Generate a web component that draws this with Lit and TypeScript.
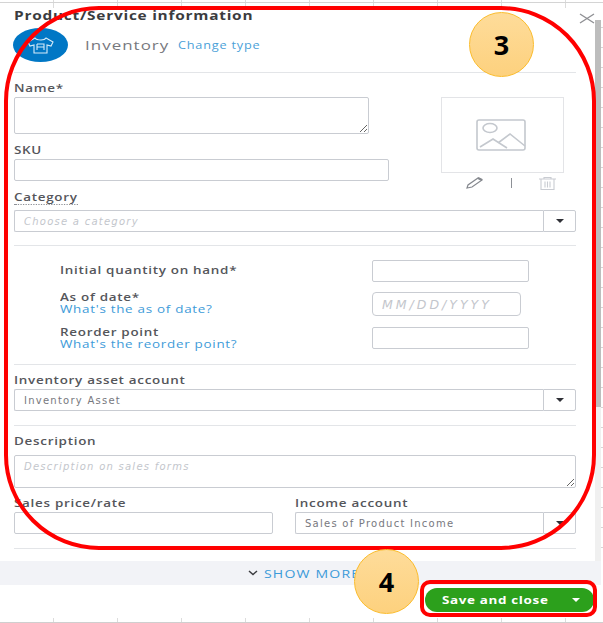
import {LitElement, css, html} from "lit";
import {customElement} from "lit/decorators.js";

@customElement("app-root")
export class AppRoot extends LitElement {

  static styles = css`
    :host {
      display: block;
      position: relative;
      width: 603px;
      height: 623px;
      overflow: hidden;
      background: #fff;
      font-family: "Open Sans", sans-serif;
      color: #4a4b50;
    }
    * { box-sizing: border-box; }

    /* spreadsheet showing behind the panel */
    .sheet-top {
      height: 8px;
      background:
        linear-gradient(#d4d4d4, #d4d4d4) 0 2px / 100% 1px no-repeat,
        repeating-linear-gradient(90deg, transparent 0 53px, #dcdcdc 53px 54px, transparent 54px 64px);
    }
    .sheet-bottom {
      height: 5px;
      margin-top: 1px;
      background:
        linear-gradient(#cfcfcf, #cfcfcf) 0 4px / 100% 1px no-repeat,
        repeating-linear-gradient(90deg, transparent 0 53px, #dcdcdc 53px 54px, transparent 54px 64px);
    }

    .panel { display: flex; height: 553px; }
    .form {
      width: 595px;
      padding: 1px 19px 0 14px;
      flex: none;
    }
    .scroll {
      width: 6px;
      flex: none;
      margin-top: 12px;
      background: #f0f0f0;
    }
    .thumb { height: 387px; background: #bdbdbd; }
    .gutter {
      flex: 1;
      background: repeating-linear-gradient(180deg, transparent 0 19px, #d6d6d6 19px 20px);
    }

    /* the reference is a horizontally stretched capture */
    .wide {
      display: block;
      width: fit-content;
      transform: scaleX(1.28);
      transform-origin: left center;
    }

    .title-row {
      display: flex;
      justify-content: space-between;
      align-items: center;
      height: 14px;
      margin-right: -19px;
    }
    .title {
      font-size: 11.5px;
      font-weight: 700;
      letter-spacing: 0.56px;
      line-height: 14px;
      color: #3b3c40;
      transform: scaleX(1.34);
    }
    .close { width: 16px; height: 11px; display: block; margin-top: 4px; }

    .head { display: flex; align-items: center; height: 34px; margin-top: 5px; }
    .avatar {
      width: 55px;
      height: 34px;
      margin-left: -1px;
      border-radius: 50%;
      background: #0077c5;
      display: flex;
      align-items: center;
      justify-content: center;
      flex: none;
    }
    .type {
      margin-left: 17px;
      font-size: 13px;
      letter-spacing: 0.8px;
      color: #77787e;
      transform: scaleX(1.3);
    }
    .change {
      margin-left: 28px;
      font-size: 10px;
      letter-spacing: 0.62px;
      color: #4a9fd8;
      transform: scaleX(1.27);
    }

    hr { border: 0; height: 1px; background: #e3e5e8; margin: 0; }
    .hr-head { margin-top: 10px; }

    label {
      display: block;
      width: fit-content;
      font-size: 10.5px;
      font-weight: 600;
      letter-spacing: 0.55px;
      line-height: 14px;
      color: #55565b;
      transform: scaleX(1.28);
      transform-origin: left center;
    }
    input, textarea {
      display: block;
      margin: 0;
      padding: 0 9px;
      background: #fff;
      border: 1px solid #c9ccd2;
      border-radius: 2px;
      font-family: "DejaVu Sans", sans-serif;
      font-size: 10px;
      letter-spacing: 1.25px;
      color: #77787e;
      outline: none;
    }
    input { height: 22px; }
    textarea { padding-top: 3px; }
    ::placeholder { color: #c3c6cc; font-style: italic; opacity: 1; }

    .top {
      display: grid;
      grid-template-columns: 427px 123px;
      margin-top: 8px;
      height: 100px;
    }
    .name { width: 355px; height: 37px; margin-top: 2px; }
    .sku-label { margin-top: 9px; }
    .sku { width: 375px; margin-top: 2px; }
    .photo-col { padding-top: 16px; }
    .photo {
      height: 76px;
      padding-right: 4px;
      border: 1px solid #e3e4e7;
      display: flex;
      align-items: center;
      justify-content: center;
    }
    .photo-tools {
      display: flex;
      align-items: center;
      justify-content: space-between;
      height: 14px;
      margin-top: 3px;
      padding: 0 8px 0 24px;
    }
    .bar { width: 1px; height: 10px; background: #8d9096; }

    label.cat-label {
      margin-top: 10px;
      border-bottom: 1px dotted #8d9096;
      line-height: 13px;
    }
    .select { display: flex; height: 22px; margin-top: 5px; }
    .select input {
      flex: 1;
      min-width: 0;
      border-right: 0;
      border-radius: 2px 0 0 2px;
    }
    .caret {
      width: 33px;
      flex: none;
      border: 1px solid #c9ccd2;
      border-radius: 0 2px 2px 0;
      display: flex;
      align-items: center;
      justify-content: center;
    }
    .caret i {
      width: 0;
      height: 0;
      border-left: 4px solid transparent;
      border-right: 4px solid transparent;
      border-top: 4px solid #2f3036;
    }
    .hr-cat { margin-top: 13px; }

    .qty {
      display: grid;
      grid-template-columns: 312px auto;
      grid-template-rows: 22px 24px 23px;
      row-gap: 10px;
      align-items: center;
      padding: 14px 0 15px 46px;
      justify-items: start;
    }
    .qty input { width: 157px; }
    .qty input.r3 { align-self: end; }
    .qty input.date {
      width: 149px;
      height: 24px;
      border-radius: 4px;
      font-size: 12.5px;
      letter-spacing: 3px;
    }
    .lift { margin-bottom: 2px; }
    .two label { line-height: 12px; }
    .link {
      font-size: 10.5px;
      letter-spacing: 0.55px;
      line-height: 12px;
      color: #3d9bd9;
    }

    .block { padding-top: 8px; }
    .block .select { margin-top: 2px; }
    .hr-asset { margin-top: 14px; }
    textarea.desc { width: 100%; height: 33px; margin-top: 7px; padding-top: 5px; }

    .prices {
      display: grid;
      grid-template-columns: 259px 281px;
      column-gap: 22px;
      padding-top: 8px;
    }
    .prices input.price { width: 100%; margin-top: 2px; }
    .prices .select { margin-top: 2px; }
    .hr-end { margin-top: 14px; }

    .more {
      height: 24px;
      margin-right: 2px;
      background: #f2f3f7;
      display: flex;
      align-items: center;
      padding-left: 248px;
      gap: 6px;
      font-size: 11px;
      letter-spacing: 0.9px;
      color: #3d9bd9;
    }

    .footer {
      display: flex;
      justify-content: flex-end;
      padding: 3px 9px 0 0;
      height: 32px;
    }
    .save {
      width: 169px;
      height: 24px;
      border-radius: 12px;
      background: #2ca01c;
      color: #fff;
      display: flex;
      align-items: center;
      padding: 0 14px 0 17px;
      justify-content: space-between;
      font-size: 10.5px;
      font-weight: 700;
      letter-spacing: 0.5px;
    }
    .save i {
      width: 0;
      height: 0;
      border-left: 4px solid transparent;
      border-right: 4px solid transparent;
      border-top: 4px solid #fff;
    }

    /* tutorial annotations painted over the screenshot */
    .ring {
      position: absolute;
      border: 4px solid #f00;
      pointer-events: none;
    }
    .ring-form { left: 4px; top: 6px; width: 592px; height: 544px; border-radius: 95px; }
    .ring-save { left: 420px; top: 580px; width: 177px; height: 37px; border-radius: 10px; }
    .badge {
      position: absolute;
      width: 65px;
      height: 65px;
      border-radius: 50%;
      border: 1px solid #fbbc2c;
      background: linear-gradient(180deg, #fedc9a, #fdd17e);
      color: #000;
      display: flex;
      align-items: center;
      justify-content: center;
      font-size: 27px;
      font-weight: 700;
    }
    .badge-3 { left: 469px; top: 12px; }
    .badge-4 { left: 354px; top: 549px; }
  `

  render() {
    return html`
      <div class="sheet-top"></div>
      <div class="panel">
        <div class="form">
          <div class="title-row">
            <div class="title wide">Product/Service information</div>
            <svg class="close" viewBox="0 0 16 11" fill="none" stroke="#8f9094" stroke-width="1.4">
              <path d="M1 1l14 9M15 1L1 10"/>
            </svg>
          </div>
          <div class="head">
            <div class="avatar">
              <svg width="27" height="17" viewBox="0 0 27 17" fill="none" stroke="#d6ecf9" stroke-width="1.1">
                <path d="M8 1L1 5l2 4 4-1v8h13V8l4 1 2-4-7-4c-1 1.600-3 2-5 2S9 2.600 8 1z"/>
                <path d="M10 7h7v3h-7M10 7v6M17 10v3"/>
              </svg>
            </div>
            <span class="type wide">Inventory</span>
            <span class="change wide">Change type</span>
          </div>
          <hr class="hr-head">

          <div class="top">
            <div>
              <label>Name*</label>
              <textarea class="name"></textarea>
              <label class="sku-label">SKU</label>
              <input class="sku">
            </div>
            <div class="photo-col">
              <div class="photo">
                <svg width="50" height="33" viewBox="0 0 50 33" fill="none" stroke="#c4c8ce" stroke-width="1.6">
                  <rect x="1" y="1" width="48" height="30" rx="2"/>
                  <ellipse cx="14" cy="9" rx="7" ry="4.500"/>
                  <path d="M4 28l13-8 14 9M22 24l12-9 15 12"/>
                </svg>
              </div>
              <div class="photo-tools">
                <svg width="18" height="12" viewBox="0 0 18 12" fill="none" stroke="#85888e" stroke-width="1.2">
                  <path d="M2 11l1-3 10-7 4 2-10 7z"/><path d="M13 1l4 2" stroke-width="2"/>
                </svg>
                <span class="bar"></span>
                <svg width="17" height="13" viewBox="0 0 17 13" fill="none" stroke="#c9ccd2" stroke-width="1.1">
                  <path d="M0 2h17M5 2V.5h7V2M2 2v10.500h13V2M6 4.500v6M8.500 4.500v6M11 4.500v6"/>
                </svg>
              </div>
            </div>
          </div>

          <label class="cat-label">Category</label>
          <div class="select">
            <input placeholder="Choose a category">
            <span class="caret"><i></i></span>
          </div>
          <hr class="hr-cat">

          <div class="qty">
            <label class="lift">Initial quantity on hand*</label>
            <input>
            <div class="two lift">
              <label>As of date*</label>
              <span class="link wide">What's the as of date?</span>
            </div>
            <input class="date" placeholder="MM/DD/YYYY">
            <div class="two">
              <label>Reorder point</label>
              <span class="link wide">What's the reorder point?</span>
            </div>
            <input class="r3">
          </div>
          <hr>

          <div class="block">
            <label>Inventory asset account</label>
            <div class="select">
              <input value="Inventory Asset">
              <span class="caret"><i></i></span>
            </div>
          </div>
          <hr class="hr-asset">

          <div class="block">
            <label>Description</label>
            <textarea class="desc" placeholder="Description on sales forms"></textarea>
          </div>

          <div class="prices">
            <div>
              <label>Sales price/rate</label>
              <input class="price">
            </div>
            <div>
              <label>Income account</label>
              <div class="select">
                <input value="Sales of Product Income">
                <span class="caret"><i></i></span>
              </div>
            </div>
          </div>
          <hr class="hr-end">
        </div>
        <div class="scroll"><div class="thumb"></div></div>
        <div class="gutter"></div>
      </div>

      <div class="more">
        <svg width="10" height="6" viewBox="0 0 10 6" fill="none" stroke="#3b3c40" stroke-width="1.5">
          <path d="M1 1l4 3.500L9 1"/>
        </svg>
        <span class="wide">SHOW MORE</span>
      </div>
      <div class="footer">
        <div class="save"><span class="wide">Save and close</span><i></i></div>
      </div>
      <div class="sheet-bottom"></div>

      <div class="ring ring-form"></div>
      <div class="ring ring-save"></div>
      <div class="badge badge-3">3</div>
      <div class="badge badge-4">4</div>
    `
  }
}
